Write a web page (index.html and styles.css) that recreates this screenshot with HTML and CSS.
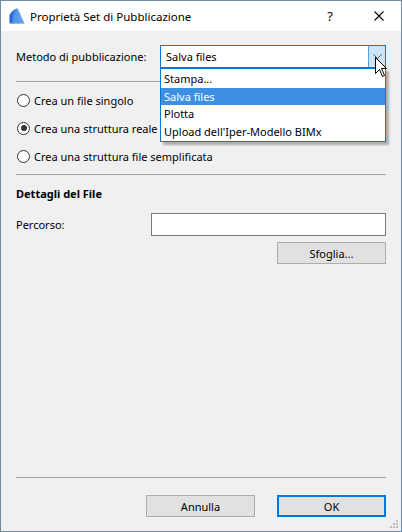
FILE: index.html
```html
<!DOCTYPE html>
<html lang="it">
<head>
<meta charset="utf-8">
<title>Proprietà Set di Pubblicazione</title>
<link rel="stylesheet" href="styles.css">
</head>
<body>
<div class="window">
  <div class="titlebar">
    <svg class="app-icon" width="16" height="16" viewBox="0 0 16 16">
      <defs>
        <linearGradient id="g1" x1="0" y1="0" x2="1" y2="0">
          <stop offset="0" stop-color="#1f5fd6"/>
          <stop offset="1" stop-color="#8fc2f5"/>
        </linearGradient>
      </defs>
      <path d="M0.5 15.5 L0.5 7 Q3 2 7.5 0.5 L8.5 0.5 L15.5 15.5 Z" fill="url(#g1)"/>
      <path d="M3 15.5 Q4.5 6 8 1.5 L8.5 0.5 L15.5 15.5 Z" fill="#5aa0ef" opacity="0.7"/>
    </svg>
    <span class="title">Proprietà Set di Pubblicazione</span>
    <span class="tb-help">?</span>
    <svg class="tb-close" width="10" height="10" viewBox="0 0 10 10">
      <path d="M0.5 0.5 L9.5 9.5 M9.5 0.5 L0.5 9.5" stroke="#000" stroke-width="1.1" fill="none"/>
    </svg>
  </div>
  <div class="content">
    <div class="row method">
      <span class="label-wide">Metodo di pubblicazione:</span>
      <div class="combo">
        <span class="combo-value">Salva files</span>
        <span class="combo-btn">
          <svg width="9" height="5" viewBox="0 0 9 5"><path d="M0.5 0.5 L4.5 4.5 L8.5 0.5" stroke="#555" stroke-width="1" fill="none"/></svg>
        </span>
        <ul class="combo-list">
          <li>Stampa...</li>
          <li class="selected">Salva files</li>
          <li>Plotta</li>
          <li>Upload dell'Iper-Modello BIMx</li>
        </ul>
        <svg class="cursor" width="13" height="21" viewBox="0 0 13 21">
          <path d="M0.5 0.5 L0.5 16.5 L4.5 12.5 L7.5 19.5 L9.5 18.5 L6.5 11.5 L11.5 11.5 Z" fill="#fff" stroke="#000" stroke-width="1" stroke-linejoin="miter"/>
        </svg>
      </div>
    </div>
    <div class="sep sep-top"></div>
    <div class="radios">
      <label class="radio-row"><span class="radio"></span>Crea un file singolo</label>
      <label class="radio-row"><span class="radio checked"></span>Crea una struttura reale</label>
      <label class="radio-row"><span class="radio"></span>Crea una struttura file semplificata</label>
    </div>
    <div class="sep"></div>
    <div class="section-title">Dettagli del File</div>
    <div class="row path">
      <span class="label-path">Percorso:</span>
      <div class="input"></div>
    </div>
    <div class="row browse">
      <div class="btn">Sfoglia...</div>
    </div>
    <div class="spacer"></div>
    <div class="sep"></div>
    <div class="row actions">
      <div class="btn">Annulla</div>
      <div class="btn default">OK</div>
    </div>
  </div>
  <svg class="grip" width="8" height="8" viewBox="0 0 8 8">
    <rect x="6" y="0" width="2" height="2" fill="#bdbdbd"/>
    <rect x="3" y="3" width="2" height="2" fill="#bdbdbd"/>
    <rect x="6" y="3" width="2" height="2" fill="#bdbdbd"/>
    <rect x="0" y="6" width="2" height="2" fill="#bdbdbd"/>
    <rect x="3" y="6" width="2" height="2" fill="#bdbdbd"/>
    <rect x="6" y="6" width="2" height="2" fill="#bdbdbd"/>
  </svg>
</div>
</body>
</html>
```
FILE: styles.css
```css
* { box-sizing: border-box; }
html, body { margin: 0; padding: 0; }
body {
  font-family: "Noto Sans", "Open Sans", sans-serif;
  font-size: 11px;
  color: #000;
  background: #fff;
}
.window {
  position: relative;
  width: 402px;
  height: 532px;
  border: 1px solid #6f8aa4;
  display: flex;
  flex-direction: column;
  background: #f0f0f0;
}
.titlebar {
  height: 30px;
  background: #fff;
  display: flex;
  align-items: center;
  padding-left: 8px;
  flex: none;
}
.app-icon { flex: none; margin-top: -1px; }
.title {
  margin-left: 5px;
  font-size: 11.5px;
  flex: 1;
}
.tb-help {
  font-size: 13px;
  width: 10px;
  text-align: center;
  margin-right: 39px;
}
.tb-close { margin-right: 17px; }
.content {
  flex: 1;
  display: flex;
  flex-direction: column;
  padding: 0 15px 14px 15px;
  border-top: 1px solid #f0f0f0;
}
.row { display: flex; align-items: center; }
.method { margin-top: 13px; height: 23px; }
.label-wide { width: 144px; flex: none; }
.combo {
  position: relative;
  flex: 1;
  height: 23px;
  border: 1px solid #0078d7;
  background: #fff;
  display: flex;
  align-items: center;
}
.combo-value { flex: 1; padding-left: 5px; }
.combo-btn {
  width: 17px;
  height: 21px;
  background: #cce4f7;
  border-left: 1px solid #569de5;
  display: flex;
  align-items: center;
  justify-content: center;
}
.combo-list {
  position: absolute;
  left: -1px;
  right: -1px;
  top: 22px;
  margin: 0;
  padding: 1px 0;
  list-style: none;
  background: #fff;
  border: 1px solid #0078d7;
  box-shadow: 3px 3px 2px rgba(0, 0, 0, 0.28);
  z-index: 2;
}
.combo-list li {
  height: 17.5px;
  line-height: 17.5px;
  padding-left: 3px;
}
.combo-list li.selected { background: #3c8fe2; color: #fff; }
.cursor {
  position: absolute;
  right: -3px;
  top: 11px;
  z-index: 3;
}
.sep { height: 1px; background: #a0a0a0; flex: none; }
.sep-top { margin-top: 13px; }
.radios { padding-top: 4px; padding-bottom: 4px; }
.radio-row {
  display: flex;
  align-items: center;
  height: 28px;
}
.radio {
  width: 13px;
  height: 13px;
  border: 1px solid #333;
  border-radius: 50%;
  background: #fff;
  margin-left: 1px;
  margin-right: 4px;
  position: relative;
  flex: none;
}
.radio.checked::after {
  content: "";
  position: absolute;
  left: 2.5px;
  top: 2.5px;
  width: 6px;
  height: 6px;
  border-radius: 50%;
  background: #333;
}
.section-title {
  font-weight: bold;
  margin-top: 11px;
  line-height: 16px;
}
.path { margin-top: 11px; }
.label-path { width: 135px; flex: none; }
.input {
  flex: 1;
  height: 23px;
  background: #fff;
  border: 1px solid #7a7a7a;
}
.browse { margin-top: 6px; justify-content: flex-end; }
.btn {
  width: 109px;
  height: 22px;
  background: #e1e1e1;
  border: 1px solid #adadad;
  display: flex;
  align-items: center;
  justify-content: center;
}
.btn.default { border: 2px solid #0078d7; }
.spacer { flex: 1; }
.actions { margin-top: 17px; justify-content: flex-end; gap: 22px; }
.grip { position: absolute; right: 3px; bottom: 3px; }
```
